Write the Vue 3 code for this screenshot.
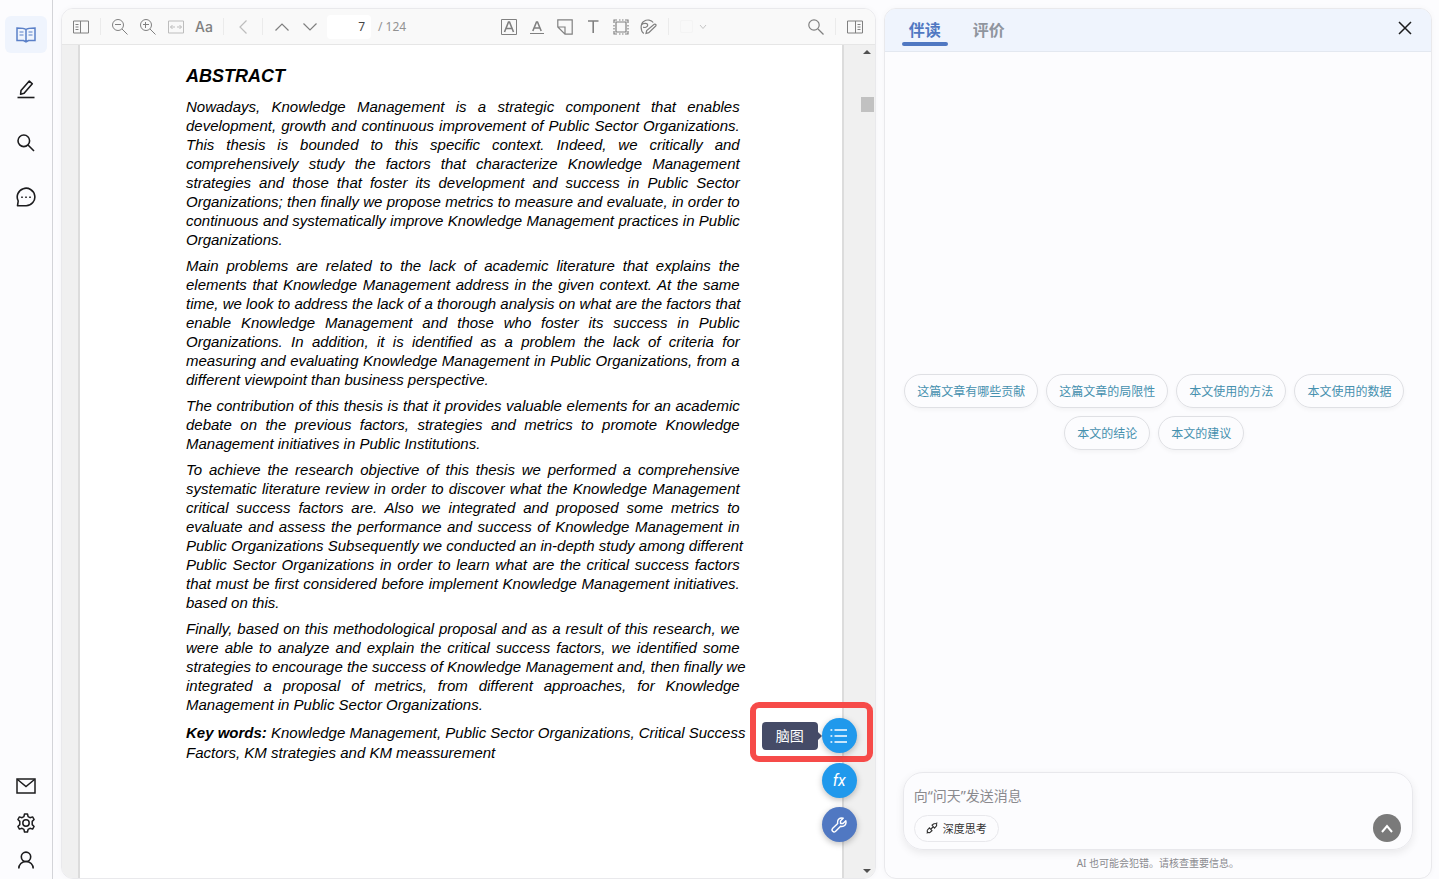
<script setup>
import { ref } from 'vue';


const page = ref(7);
const message = ref('');
const activeTab = ref('read');

const tabs = [
    { key: 'read', label: '伴读' },
    { key: 'review', label: '评价' }
];

const questions = [
    '这篇文章有哪些贡献',
    '这篇文章的局限性',
    '本文使用的方法',
    '本文使用的数据',
    '本文的结论',
    '本文的建议'
];

// text layer of the document, one entry per printed line
const paragraphs = [
    [
        'Nowadays, Knowledge Management is a strategic component that enables',
        'development, growth and continuous improvement of Public Sector Organizations.',
        'This thesis is bounded to this specific context. Indeed, we critically and',
        'comprehensively study the factors that characterize Knowledge Management',
        'strategies and those that foster its development and success in Public Sector',
        'Organizations; then finally we propose metrics to measure and evaluate, in order to',
        'continuous and systematically improve Knowledge Management practices in Public',
        'Organizations.'
    ],
    [
        'Main problems are related to the lack of academic literature that explains the',
        'elements that Knowledge Management address in the given context. At the same',
        'time, we look to address the lack of a thorough analysis on what are the factors that',
        'enable Knowledge Management and those who foster its success in Public',
        'Organizations. In addition, it is identified as a problem the lack of criteria for',
        'measuring and evaluating Knowledge Management in Public Organizations, from a',
        'different viewpoint than business perspective.'
    ],
    [
        'The contribution of this thesis is that it provides valuable elements for an academic',
        'debate on the previous factors, strategies and metrics to promote Knowledge',
        'Management initiatives in Public Institutions.'
    ],
    [
        'To achieve the research objective of this thesis we performed a comprehensive',
        'systematic literature review in order to discover what the Knowledge Management',
        'critical success factors are. Also we integrated and proposed some metrics to',
        'evaluate and assess the performance and success of Knowledge Management in',
        'Public Organizations Subsequently we conducted an in-depth study among different',
        'Public Sector Organizations in order to learn what are the critical success factors',
        'that must be first considered before implement Knowledge Management initiatives.',
        'based on this.'
    ],
    [
        'Finally, based on this methodological proposal and as a result of this research, we',
        'were able to analyze and explain the critical success factors, we identified some',
        'strategies to encourage the success of Knowledge Management and, then finally we',
        'integrated a proposal of metrics, from different approaches, for Knowledge',
        'Management in Public Sector Organizations.'
    ]
];
</script>




<template>

    <div class="app">

        <nav class="sidebar">
            <div class="nav-group">
                <button class="nav-btn active" aria-label="阅读">
                    <svg width="20" height="16" viewBox="0 0 20 16" fill="none" stroke="currentColor" stroke-width="1.5">
                        <path d="M10 2.500C8.500 1.200 6.500 1 1 1v12.500h6.500L10 15l2.500-1.500H19V1c-5.500 0-7.500.2-9 1.500zM10 2.500V14" />
                        <path d="M3.500 5h4M3.500 8h4M12.500 5h4M12.500 8h4" stroke-width="1.200" />
                    </svg>
                </button>
                <button class="nav-btn" aria-label="笔记">
                    <svg width="18" height="20" viewBox="0 0 18 20" fill="none" stroke="currentColor" stroke-width="1.600" stroke-linejoin="round">
                        <path d="M4 11.500 12.300 2l3 2.800-8.200 9.500-3.500 1z" />
                        <path d="M.5 18.500h17" />
                    </svg>
                </button>
                <button class="nav-btn" aria-label="搜索">
                    <svg width="18" height="18" viewBox="0 0 18 18" fill="none" stroke="currentColor" stroke-width="1.600">
                        <circle cx="6.800" cy="6.800" r="5.800" />
                        <path d="m11 11 6 6" />
                    </svg>
                </button>
                <button class="nav-btn" aria-label="对话">
                    <svg width="20" height="20" viewBox="0 0 20 20" fill="none" stroke="currentColor" stroke-width="1.600">
                        <path d="M1.500 18.800 2.200 14A8.800 8.800 0 1 1 10.200 18.800z" stroke-linejoin="round" />
                        <path d="M5.200 10.200h1.600M9.200 10.200h1.600M13.200 10.200h1.600" />
                    </svg>
                </button>
            </div>
            <div class="nav-group bottom">
                <button class="nav-btn" aria-label="邮件">
                    <svg width="20" height="16" viewBox="0 0 20 16" fill="none" stroke="currentColor" stroke-width="1.500">
                        <path d="M1 1h18v14H1z" />
                        <path d="m1.500 1.500 8.500 7 8.500-7" />
                    </svg>
                </button>
                <button class="nav-btn" aria-label="设置">
                    <svg width="20" height="20" viewBox="0 0 20 20" fill="none" stroke="currentColor" stroke-width="1.500" stroke-linejoin="round">
                        <path d="M8.500 1h3l.6 2.600 1.900 1.100 2.600-.8 1.500 2.600-1.900 1.900v3.200l1.900 1.900-1.500 2.600-2.600-.8-1.900 1.100-.6 2.600h-3l-.6-2.600L6 15.300l-2.600.8-1.500-2.600 1.900-1.900V8.400L1.900 6.500l1.500-2.600 2.600.8 1.900-1.100z" />
                        <circle cx="10" cy="10" r="3.200" />
                    </svg>
                </button>
                <button class="nav-btn" aria-label="账户">
                    <svg width="16" height="18" viewBox="0 0 16 18" fill="none" stroke="currentColor" stroke-width="1.600">
                        <circle cx="8" cy="5.800" r="4.700" />
                        <path d="M.8 17.500c0-4 3-7 7.200-7s7.200 3 7.200 7" />
                    </svg>
                </button>
            </div>
        </nav>


        <main class="workspace">

            <section class="reader">

                <div class="toolbar">
                    <div class="tools">
                        <button class="tool" aria-label="侧栏">
                            <svg width="16" height="14" viewBox="0 0 16 14" fill="none" stroke="currentColor">
                                <path d="M.5 1h15v12H.5zM7.500 1v12M2.500 4.500h3M2.500 7h3M2.500 9.500h3" />
                            </svg>
                        </button>
                        <span class="divider"></span>
                        <button class="tool" aria-label="缩小">
                            <svg width="16" height="16" viewBox="0 0 16 16" fill="none" stroke="currentColor">
                                <circle cx="6" cy="6" r="5.500" />
                                <path d="m10 10 5.500 5.500M3 5.500h6" />
                            </svg>
                        </button>
                        <button class="tool" aria-label="放大">
                            <svg width="16" height="16" viewBox="0 0 16 16" fill="none" stroke="currentColor">
                                <circle cx="6" cy="6" r="5.500" />
                                <path d="m10 10 5.500 5.500M3 5.500h6M5.500 3v6" />
                            </svg>
                        </button>
                        <button class="tool faded" aria-label="适合宽度">
                            <svg width="16" height="14" viewBox="0 0 16 14" fill="none" stroke="currentColor">
                                <path d="M.5 1h15v12H.5zM7 7H2.500m2-2-2 2 2 2M9 7h4.500m-2-2 2 2-2 2" />
                            </svg>
                        </button>
                        <button class="tool letters">Aa</button>
                        <span class="divider"></span>
                        <button class="tool faded" aria-label="返回">
                            <svg width="8" height="14" viewBox="0 0 8 14" fill="none" stroke="currentColor" stroke-width="1.200"><path d="M7.500.5 1 7l6.500 6.500" /></svg>
                        </button>
                        <span class="divider"></span>
                        <button class="tool" aria-label="上一页">
                            <svg width="14" height="8" viewBox="0 0 14 8" fill="none" stroke="currentColor" stroke-width="1.200"><path d="M.5 7.500 7 1l6.500 6.500" /></svg>
                        </button>
                        <button class="tool" aria-label="下一页">
                            <svg width="14" height="8" viewBox="0 0 14 8" fill="none" stroke="currentColor" stroke-width="1.200"><path d="M.5.5 7 7 13.500.5" /></svg>
                        </button>
                        <input v-model="page" class="page-input" type="text" aria-label="页码" />
                        <span class="page-total">/ 124</span>
                    </div>

                    <div class="tools">
                        <button class="tool" aria-label="高亮">
                            <svg width="16" height="16" viewBox="0 0 16 16" fill="none" stroke="currentColor">
                                <path d="M.5.5h15v15H.5z" />
                                <path d="m3.500 13 4-10h1l4 10M5 9.500h6" stroke-width="1.600" />
                            </svg>
                        </button>
                        <button class="tool" aria-label="下划线">
                            <svg width="16" height="16" viewBox="0 0 16 16" fill="none" stroke="currentColor">
                                <path d="m3.800 12 3.700-9h1l3.700 9M5.200 9h5.600" stroke-width="1.600" />
                                <path d="M1 14.500h14" />
                            </svg>
                        </button>
                        <button class="tool" aria-label="便签">
                            <svg width="16" height="16" viewBox="0 0 16 16" fill="none" stroke="currentColor">
                                <path d="M.8.800h14.400v14.400H8L.8 8zM.8 8H8v7.200" stroke-width="1.200" />
                            </svg>
                        </button>
                        <button class="tool" aria-label="文本">
                            <svg width="16" height="16" viewBox="0 0 16 16" fill="none" stroke="currentColor" stroke-width="1.600">
                                <path d="M3 2h10.500M8.200 2v12" />
                            </svg>
                        </button>
                        <button class="tool" aria-label="区域">
                            <svg width="16" height="16" viewBox="0 0 16 16" fill="none" stroke="currentColor" stroke-width="1.200">
                                <path d="M3 3h10v10H3z" />
                                <path d="M1 4V1h3M6 1h1.500M9 1h1.500M12 1h3v3M15 6v1.500M15 9v1.500M15 12v3h-3M10.500 15H9M7.500 15H6M4 15H1v-3M1 10.500V9M1 7.500V6" />
                            </svg>
                        </button>
                        <button class="tool" aria-label="画笔">
                            <svg width="17" height="16" viewBox="0 0 17 16" fill="none" stroke="currentColor" stroke-width="1.200">
                                <path d="M3.800 14.500C.2 12 .2 4.500 4 2.200 7 .200 11.500.8 13.200 3.500M1.300 6c2.200-2.500 6.500-2 6.400.2C7.600 8 4.500 9.200 3.200 8" />
                                <path d="m6 14.500.7-3 7.500-6.200c1.200-.7 2.400.6 1.500 1.700l-6.900 6.700z" />
                            </svg>
                        </button>
                        <span class="divider"></span>
                        <button class="color-pick" aria-label="颜色">
                            <span class="swatch"></span>
                            <svg width="8" height="6" viewBox="0 0 8 6" fill="none" stroke="currentColor"><path d="M1 1l3 3.500L7 1" /></svg>
                        </button>
                    </div>

                    <div class="tools">
                        <button class="tool" aria-label="查找">
                            <svg width="16" height="16" viewBox="0 0 16 16" fill="none" stroke="currentColor" stroke-width="1.200">
                                <circle cx="6" cy="6" r="5.200" />
                                <path d="m10 10 5.500 5.500" />
                            </svg>
                        </button>
                        <span class="divider"></span>
                        <button class="tool" aria-label="批注栏">
                            <svg width="16" height="14" viewBox="0 0 16 14" fill="none" stroke="currentColor">
                                <path d="M.5 1h15v12H.5zM8.500 1v12M10.500 4.500h3M10.500 7h3M10.500 9.500h3" />
                            </svg>
                        </button>
                    </div>
                </div>

                <div class="viewer">
                    <article class="sheet">
                        <h1 class="sheet-title">ABSTRACT</h1>
                        <p v-for="(lines, i) in paragraphs" :key="i">
                            <span v-for="line in lines" :key="line" class="line">{{ line }}</span>
                        </p>
                        <p class="keywords">
                            <span class="line"><strong>Key words:</strong> Knowledge Management, Public Sector Organizations, Critical Success</span>
                            <span class="line">Factors, KM strategies and KM meassurement</span>
                        </p>
                    </article>

                    <div class="scrollbar">
                        <span class="arrow up"></span>
                        <span class="thumb"></span>
                        <span class="arrow down"></span>
                    </div>
                </div>

                <div class="float-tools">
                    <div class="float-marked">
                        <span class="tooltip">脑图</span>
                        <button class="float-btn" aria-label="脑图">
                            <svg width="18" height="14" viewBox="0 0 18 14" fill="none" stroke="currentColor" stroke-width="1.300">
                                <path d="M4.500 1H17M4.500 7H17M4.500 13H17M.5 1h1.800M.5 7h1.800M.5 13h1.800" />
                            </svg>
                        </button>
                    </div>
                    <button class="float-btn formula">fx</button>
                    <button class="float-btn dark" aria-label="工具">
                        <svg width="16" height="16" viewBox="0 0 16 16" fill="none" stroke="currentColor" stroke-width="1.400" stroke-linejoin="round">
                            <path d="M12.200 1.200 9.500 4v2.500H12l2.800-2.700c1 3.600-1.600 6.200-5.200 5.500l-5.200 5.200c-1.800 1.600-4.400-1-2.900-2.900L6.700 6.400C6 2.800 8.600.200 12.200 1.200z" />
                        </svg>
                    </button>
                </div>

            </section>


            <aside class="panel">

                <header class="panel-head">
                    <div class="tabs" role="tablist">
                        <button
                            v-for="tab in tabs"
                            :key="tab.key"
                            class="tab"
                            :class="{ active: activeTab == tab.key }"
                            role="tab"
                            @click="activeTab = tab.key"
                        >{{ tab.label }}</button>
                    </div>
                    <button class="close" aria-label="关闭">
                        <svg width="14" height="14" viewBox="0 0 14 14" fill="none" stroke="currentColor" stroke-width="1.500"><path d="m1 1 12 12M13 1 1 13" /></svg>
                    </button>
                </header>

                <div class="questions">
                    <button v-for="q in questions" :key="q" class="chip">{{ q }}</button>
                </div>

                <form class="composer" @submit.prevent>
                    <input v-model="message" class="message" type="text" placeholder="向“问天”发送消息" aria-label="消息" />
                    <div class="composer-row">
                        <button class="think" type="button">
                            <svg width="12" height="12" viewBox="0 0 12 12" fill="none" stroke="currentColor" stroke-width="1.100">
                                <path d="M6 3.200 7.500 2c2.500-1.500 4 .5 2.600 2.500L8.500 6.200zM3.400 5.800 1.800 7.500C.3 9.500 2 11.500 4.200 10.200l1.800-1.500zM4.500 7.500l3-3M9.800 2.200 11.300.700M.7 11.300l1.500-1.500" />
                            </svg>
                            深度思考
                        </button>
                        <button class="send" type="submit" aria-label="发送">
                            <svg width="12" height="9" viewBox="0 0 12 9" fill="none" stroke="currentColor" stroke-width="2"><path d="m1 8 5-6 5 6" /></svg>
                        </button>
                    </div>
                </form>

                <p class="notice">AI 也可能会犯错。请核查重要信息。</p>

            </aside>

        </main>

    </div>

</template>




<style>
body {
    background: #fcfcfe;
}
</style>

<style scoped>

.app {
    height: 100vh;

    display: flex;

    font-family: "Noto Sans", "Noto Sans CJK SC", sans-serif;
    color: #1c1c1e;
}

.app *,
.app *::before,
.app *::after {
    box-sizing: border-box;
}

button {
    padding: 0;
    border: none;
    background: none;
    font-family: inherit;
    color: inherit;
    cursor: pointer;
}

button svg {
    display: block;
}




.sidebar {
    flex: none;
    width: 53px;
    padding: 16px 5px 1px;

    display: flex;
    flex-direction: column;
    justify-content: space-between;

    border-right: 1px solid #d3d4d8;
}

.nav-group {
    display: flex;
    flex-direction: column;
    gap: 17px;
}

.nav-group.bottom {
    gap: 0;
}

.nav-btn {
    height: 37px;

    display: flex;
    align-items: center;
    justify-content: center;

    border-radius: 6px;
}

.nav-btn.active {
    background: #eff4fd;
    color: #5b80c8;
}




.workspace {
    flex: 1;
    min-width: 0;
    padding: 8px 7px 0 8px;

    display: grid;
    grid-template-columns: minmax(0, 1.486fr) minmax(0, 1fr);
    grid-template-rows: minmax(0, 1fr);
    gap: 8px;
}

.reader,
.panel {
    display: flex;
    flex-direction: column;
    overflow: hidden;

    border: 1px solid #e9e9ec;
    border-radius: 12px;
    box-shadow: 0 0 6px rgba(0, 0, 0, 0.03);
}

.reader {
    position: relative;
}




.toolbar {
    flex: none;
    height: 36px;
    padding: 0 6px 0 5px;

    display: flex;
    align-items: center;
    justify-content: space-between;

    background: #f9f9f9;
    border-bottom: 1px solid #e6e6e6;
    color: #808080;
}

.tools {
    display: flex;
    align-items: center;
}

.tool {
    width: 28px;
    height: 28px;

    display: flex;
    align-items: center;
    justify-content: center;
}

.tool.faded {
    color: #bdbdbd;
}

.letters {
    font-family: Inter, sans-serif;
    font-size: 14px;
    font-weight: 500;
}

.divider {
    width: 1px;
    height: 17px;
    margin: 0 5px;
    background: #ebebeb;
}

.page-input {
    width: 44px;
    height: 24px;
    margin: 0 7px 0 3px;
    padding: 0 6px 0 0;

    border: none;
    border-radius: 4px;
    background: #fff;

    font-family: inherit;
    font-size: 12px;
    text-align: right;
    color: #444;
}

.page-total {
    font-size: 12px;
    color: #929292;
}

.color-pick {
    height: 28px;
    padding: 0 6px;

    display: flex;
    align-items: center;
    gap: 6px;

    color: #c4c4c4;
}

.swatch {
    width: 13px;
    height: 13px;
    border: 1px solid #f4f4f4;
    border-radius: 2px;
}




.viewer {
    flex: 1;
    min-height: 0;
    padding-left: 16px;

    display: flex;
    gap: 16px;

    background: #f0f0f0;
}

.sheet {
    flex: 1;
    min-width: 0;
    padding: 20px 102px 0 106px;
    overflow: hidden;

    background: #fff;
    border: solid #dcdcdc;
    border-width: 0 2px;

    font-family: "Liberation Sans", Arial, sans-serif;
    font-size: 15px;
    font-style: italic;
    line-height: 19px;
    color: #000;
}

.sheet-title {
    margin: 0 0 10px;
    font-size: 18px;
    line-height: 22px;
}

.sheet p {
    margin: 0 0 7px;
}

.sheet .keywords {
    margin-top: 9px;
    line-height: 20px;
}

.line {
    display: block;
    white-space: nowrap;
    text-align: justify;
    text-align-last: justify;
}

.line:last-child {
    text-align-last: left;
}

.scrollbar {
    flex: none;
    width: 15px;
    padding: 5px 0;

    display: flex;
    flex-direction: column;
    align-items: center;
}

.thumb {
    width: 13px;
    height: 15px;
    margin-top: 43px;
    background: #c1c1c1;
}

.arrow {
    border: solid transparent;
    border-width: 0 4px;
}

.arrow.up {
    border-bottom: 4px solid #505050;
}

.arrow.down {
    margin-top: auto;
    border-top: 4px solid #505050;
}




/* floating tools over the document */
.float-tools {
    position: absolute;
    right: 2px;
    bottom: 36px;

    display: flex;
    flex-direction: column;
    align-items: flex-end;
}

.float-marked {
    height: 60px;
    padding: 7px 10px 0 6px;
    margin-bottom: 1px;

    display: flex;
    align-items: center;
    gap: 4px;

    border: 6px solid #f64b49;
    border-radius: 9px;
}

.tooltip {
    position: relative;
    padding: 0 14px;
    border-radius: 4px;
    background: #454b67;

    font-size: 14px;
    line-height: 28px;
    color: #fff;
}

.tooltip::after {
    content: "";
    position: absolute;
    top: 10px;
    left: 100%;
    border: solid transparent;
    border-width: 4px 0 4px 4px;
    border-left-color: #454b67;
}

.float-btn {
    width: 35px;
    height: 35px;

    display: flex;
    align-items: center;
    justify-content: center;

    border-radius: 50%;
    background: #2099ec;
    box-shadow: 0 2px 6px rgba(0, 0, 0, 0.25);
    color: #fff;
}

.float-tools > .float-btn {
    margin-right: 16px;
}

.float-btn.formula {
    margin-bottom: 9px;

    font-family: Roboto, sans-serif;
    font-size: 16px;
    font-style: italic;
}

.float-btn.dark {
    background: #5078c2;
}




.panel-head {
    flex: none;
    height: 43px;
    padding: 0 17px;

    display: flex;
    justify-content: space-between;

    background: #eff4fd;
    border-bottom: 1px solid #e3e8f0;
}

.tabs {
    display: flex;
    gap: 18px;
}

.tab {
    position: relative;
    padding: 0 7px 2px;

    font-size: 16px;
    font-weight: 700;
    color: #8f959e;
}

.tab.active {
    color: #5078c2;
}

.tab.active::after {
    content: "";
    position: absolute;
    left: 0;
    right: 0;
    bottom: 5px;
    height: 4px;
    border-radius: 2px;
    background: #5078c2;
}

.close {
    width: 18px;
    height: 38px;

    display: flex;
    align-items: center;
    justify-content: center;
}




.questions {
    flex: 1;
    padding: 0 23px 0 16px;

    display: flex;
    flex-wrap: wrap;
    align-content: center;
    justify-content: center;
    gap: 8px;
}

.chip {
    height: 34px;
    padding: 0 12px;

    border: 1px solid #dfe0e4;
    border-radius: 17px;
    box-shadow: 0 2px 4px rgba(0, 0, 0, 0.04);

    font-size: 12px;
    color: #4590ae;
}

.composer {
    flex: none;
    margin: 0 18px;
    padding: 10px 11px 7px 10px;

    display: flex;
    flex-direction: column;
    gap: 7px;

    border: 1px solid #e8e8ec;
    border-radius: 20px;
    box-shadow: 0 3px 8px rgba(0, 0, 0, 0.08);
}

.message {
    height: 24px;
    padding: 0;

    border: none;
    outline: none;
    background: transparent;

    font-family: inherit;
    font-size: 14px;
}

.message::placeholder {
    color: #8a8a8e;
}

.composer-row {
    display: flex;
    align-items: center;
    justify-content: space-between;
}

.think {
    height: 27px;
    padding: 0 11px;

    display: flex;
    align-items: center;
    gap: 5px;

    border: 1px solid #e8e8ec;
    border-radius: 14px;

    font-size: 11px;
    color: #333;
}

.send {
    width: 28px;
    height: 28px;

    display: flex;
    align-items: center;
    justify-content: center;

    border-radius: 50%;
    background: #7a7a7a;
    color: #fff;
}

.notice {
    margin: 0;
    padding: 3px 0 5px;

    font-size: 10px;
    line-height: 20px;
    text-align: center;
    color: #8a8a8e;
}

</style>
